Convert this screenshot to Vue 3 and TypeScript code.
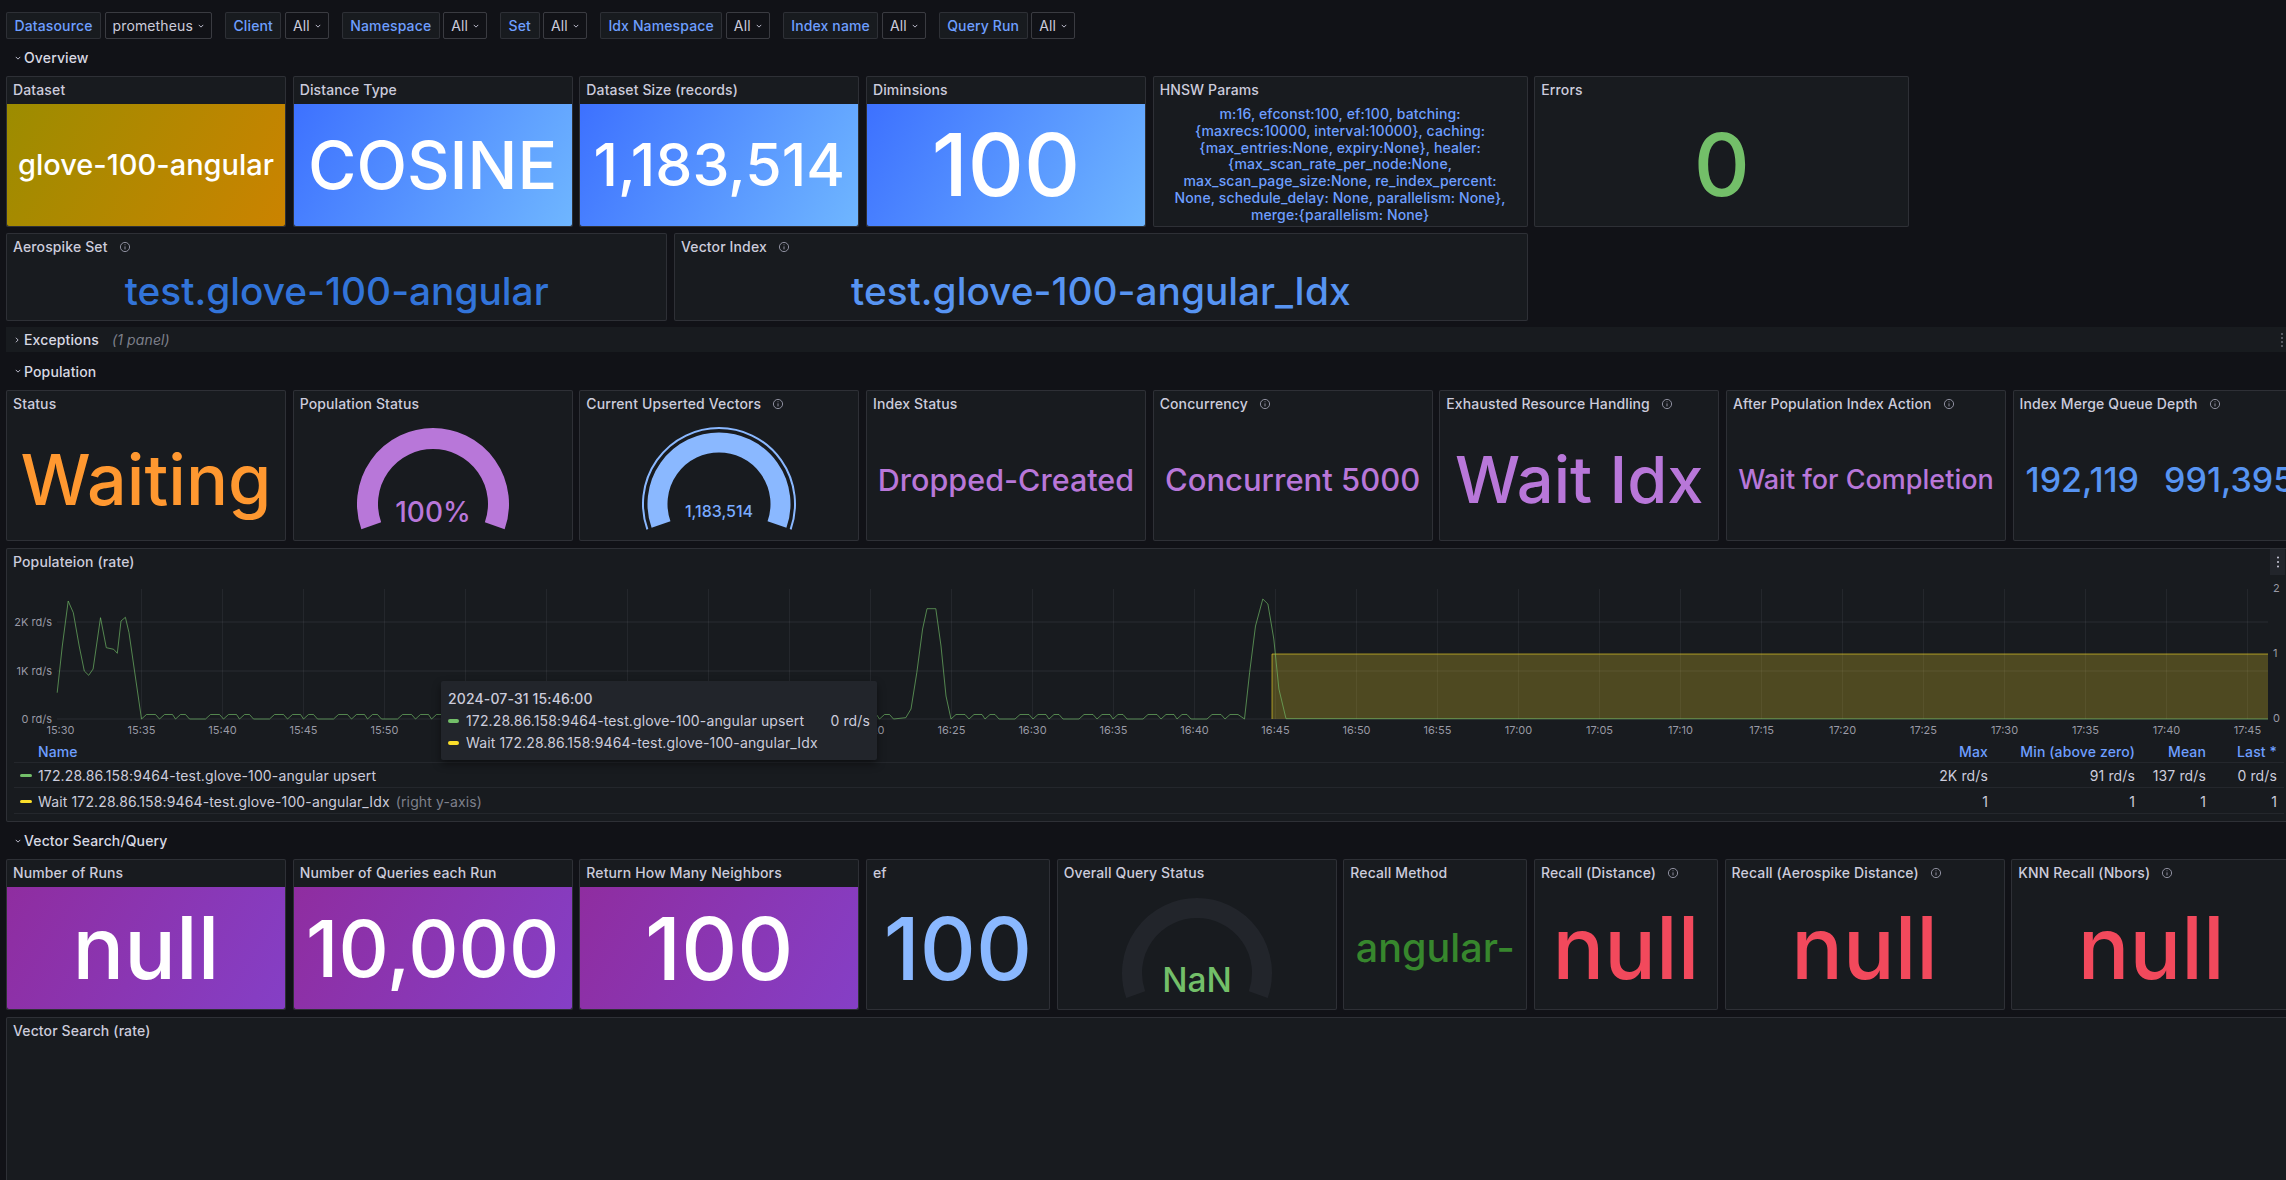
<script setup lang="ts">
interface Panel {
  title: string;
  value?: string;
  size?: number;
  color?: string;
  bg?: string;
  info?: boolean;
  gauge?: string;
}

const filters = [
  { label: 'Datasource', value: 'prometheus' },
  { label: 'Client', value: 'All' },
  { label: 'Namespace', value: 'All' },
  { label: 'Set', value: 'All' },
  { label: 'Idx Namespace', value: 'All' },
  { label: 'Index name', value: 'All' },
  { label: 'Query Run', value: 'All' },
];

const overviewTop: Panel[] = [
  { title: 'Dataset', value: 'glove-100-angular', size: 29, color: '#fff', bg: 'bg-yellow' },
  { title: 'Distance Type', value: 'COSINE', size: 66, color: '#fff', bg: 'bg-blue' },
  { title: 'Dataset Size (records)', value: '1,183,514', size: 59, color: '#fff', bg: 'bg-blue' },
  { title: 'Diminsions', value: '100', size: 87, color: '#fff', bg: 'bg-blue' },
];

const overviewBottom: Panel[] = [
  { title: 'Aerospike Set', value: 'test.glove-100-angular', size: 38.8, color: '#3274d9', info: true },
  { title: 'Vector Index', value: 'test.glove-100-angular_Idx', size: 38.8, color: '#5794f2', info: true },
];

const population: Panel[] = [
  { title: 'Status', value: 'Waiting', size: 70, color: '#ff9830' },
  { title: 'Population Status', gauge: 'percent' },
  { title: 'Current Upserted Vectors', gauge: 'vectors', info: true },
  { title: 'Index Status', value: 'Dropped-Created', size: 30.5, color: '#b877d9' },
  { title: 'Concurrency', value: 'Concurrent 5000', size: 31, color: '#b877d9', info: true },
  { title: 'Exhausted Resource Handling', value: 'Wait Idx', size: 65, color: '#b877d9', info: true },
  { title: 'After Population Index Action', value: 'Wait for Completion', size: 27, color: '#b877d9', info: true },
];

const query: Panel[] = [
  { title: 'Number of Runs', value: 'null', size: 86, color: '#fff', bg: 'bg-purple' },
  { title: 'Number of Queries each Run', value: '10,000', size: 78, color: '#fff', bg: 'bg-purple' },
  { title: 'Return How Many Neighbors', value: '100', size: 87, color: '#fff', bg: 'bg-purple' },
  { title: 'ef', value: '100', size: 87, color: '#8ab8ff' },
  { title: 'Overall Query Status', gauge: 'nan' },
  { title: 'Recall Method', value: 'angular-', size: 39.5, color: '#37872d' },
  { title: 'Recall (Distance)', value: 'null', size: 86, color: '#f2495c', info: true },
  { title: 'Recall (Aerospike Distance)', value: 'null', size: 86, color: '#f2495c', info: true },
  { title: 'KNN Recall (Nbors)', value: 'null', size: 86, color: '#f2495c', info: true },
];

const hnsw =
  'm:16, efconst:100, ef:100, batching: {maxrecs:10000, interval:10000}, caching: {max_entries:None, expiry:None}, healer: {max_scan_rate_per_node:None, max_scan_page_size:None, re_index_percent: None, schedule_delay: None, parallelism: None}, merge:{parallelism: None}';

// gauge arcs, angle measured from 12 o'clock
const arc = (r: number, a = 109.5, cx = 80, cy = 86) => {
  const rad = (a * Math.PI) / 180;
  const dx = r * Math.sin(rad);
  const dy = r * Math.cos(rad);
  return `M${cx - dx} ${cy - dy}A${r} ${r} 0 1 1 ${cx + dx} ${cy - dy}`;
};

// time axis
const ticks: { x: number; label: string }[] = [];
for (let i = 0; i < 28; i++) {
  const mins = 15 * 60 + 30 + i * 5;
  const label = `${Math.floor(mins / 60)}:${String(mins % 60).padStart(2, '0')}`;
  ticks.push({ x: 60.5 + i * 81, label });
}
// the tooltip sits on top of these labels
const tickLabels = ticks.filter((t) => t.x < 450 || t.x > 860);

// little idle bumps between the spikes
const bumps = (from: number, to: number) => {
  const base = 718;
  const top = 713.5;
  const shape: [number, number][] = [
    [5, top], [14, top], [18, base], [23, top], [31, top], [34, base], [39, top], [44, top], [48, base], [64, base],
  ];
  const pts: [number, number][] = [];
  for (let start = from; start < to; start += 64) {
    for (const [dx, y] of shape) {
      if (start + dx <= to) pts.push([start + dx, y]);
    }
  }
  return pts;
};

const linePoints: [number, number][] = [
  [57.2, 691.7], [62.3, 645], [68.2, 600], [73.3, 611.7], [79.2, 645], [84.3, 670], [88.7, 674.3], [93.1, 668],
  [100.5, 616.7], [106.3, 646.7], [113.7, 648.3], [117.3, 652.3], [121, 620], [125.4, 616.3], [129, 631.7],
  [135.7, 678], [141.5, 718],
  ...bumps(141.5, 900),
  [905.8, 716.7], [911, 708], [916.8, 671.7], [922.6, 628], [927, 607.7], [935.8, 607.7], [941, 645], [946, 695], [951, 718],
  ...bumps(951, 1240),
  [1244.5, 718], [1249.6, 671.7], [1255.5, 625], [1262.8, 598], [1267.9, 603], [1273.8, 638], [1278.9, 688], [1286, 717.7],
  [2268, 718],
];
const linePath = 'M' + linePoints.map((p) => p.join(' ')).join('L');

const legend = [
  { name: '172.28.86.158:9464-test.glove-100-angular upsert', color: '#73bf69', cells: ['2K rd/s', '91 rd/s', '137 rd/s', '0 rd/s'] },
  { name: 'Wait 172.28.86.158:9464-test.glove-100-angular_Idx', suffix: '(right y-axis)', color: '#fade2a', cells: ['1', '1', '1', '1'] },
];
</script>

<template>
  <div class="page">
    <div class="filters">
      <div v-for="f in filters" :key="f.label" class="filter">
        <span class="f-label">{{ f.label }}</span>
        <span class="f-select">
          {{ f.value }}
          <svg class="chev-s" viewBox="0 0 8 5"><path d="M1 1l3 3 3-3" /></svg>
        </span>
      </div>
    </div>

    <div class="row-head">
      <svg class="chev" viewBox="0 0 8 5"><path d="M1 1l3 3 3-3" /></svg>
      Overview
    </div>

    <div class="grid g-top">
      <div v-for="p in overviewTop" :key="p.title" class="panel">
        <div class="p-title">{{ p.title }}</div>
        <div class="p-body" :class="p.bg" :style="{ color: p.color, fontSize: p.size + 'px' }">{{ p.value }}</div>
      </div>
      <div class="panel">
        <div class="p-title">HNSW Params</div>
        <div class="hnsw">{{ hnsw }}</div>
      </div>
      <div class="panel">
        <div class="p-title">Errors</div>
        <div class="p-body zero">0</div>
      </div>
    </div>

    <div class="grid g-second">
      <div v-for="p in overviewBottom" :key="p.title" class="panel">
        <div class="p-title">
          {{ p.title }}
          <svg class="info" viewBox="0 0 12 12"><circle cx="6" cy="6" r="4.6" /><path d="M6 5.4v3M6 3.4v.8" /></svg>
        </div>
        <div class="p-body" :style="{ color: p.color, fontSize: p.size + 'px' }">{{ p.value }}</div>
      </div>
    </div>

    <div class="collapsed">
      <svg class="chev side" viewBox="0 0 5 8"><path d="M1 1l3 3-3 3" /></svg>
      Exceptions <em>(1 panel)</em>
      <span class="handle"></span>
    </div>

    <div class="row-head head-pop">
      <svg class="chev" viewBox="0 0 8 5"><path d="M1 1l3 3 3-3" /></svg>
      Population
    </div>

    <div class="grid g-pop">
      <div v-for="p in population" :key="p.title" class="panel">
        <div class="p-title">
          {{ p.title }}
          <svg v-if="p.info" class="info" viewBox="0 0 12 12"><circle cx="6" cy="6" r="4.6" /><path d="M6 5.4v3M6 3.4v.8" /></svg>
        </div>
        <div v-if="p.gauge === 'percent'" class="p-body">
          <svg class="gauge" viewBox="0 0 160 122">
            <path :d="arc(65.5)" class="band" stroke="#b877d9" stroke-width="21" />
            <text x="80" y="104" fill="#b877d9" font-size="28" class="g-text">100%</text>
          </svg>
        </div>
        <div v-else-if="p.gauge === 'vectors'" class="p-body">
          <svg class="gauge" viewBox="0 0 160 122">
            <path :d="arc(76)" class="band" stroke="#8ab8ff" stroke-width="2" />
            <path :d="arc(61.5)" class="band" stroke="#8ab8ff" stroke-width="20" />
            <text x="80" y="99" fill="#79abff" font-size="16" class="g-text">1,183,514</text>
          </svg>
        </div>
        <div v-else class="p-body" :style="{ color: p.color, fontSize: p.size + 'px' }">{{ p.value }}</div>
      </div>
      <div class="panel">
        <div class="p-title">
          Index Merge Queue Depth
          <svg class="info" viewBox="0 0 12 12"><circle cx="6" cy="6" r="4.6" /><path d="M6 5.4v3M6 3.4v.8" /></svg>
        </div>
        <div class="p-body queue"><span>192,119</span><span>991,395</span></div>
      </div>
    </div>

    <div class="panel chart-panel">
      <div class="p-title">Populateion (rate)</div>
      <div class="menu">
        <svg viewBox="0 0 4 14"><circle cx="2" cy="2.5" r="1" /><circle cx="2" cy="7" r="1" /><circle cx="2" cy="11.5" r="1" /></svg>
      </div>
      <svg class="chart" viewBox="6 575 2286 167">
        <line v-for="t in ticks.slice(1)" :key="t.x" :x1="t.x" :x2="t.x" y1="588" y2="718" class="grid-v" />
        <line v-for="y in [621, 670, 718]" :key="y" x1="57" x2="2268" :y1="y" :y2="y" class="grid-h" />
        <text v-for="t in tickLabels" :key="t.label" :x="t.x" y="733" class="tick">{{ t.label }}</text>
        <text x="52" y="625" class="axis">2K rd/s</text>
        <text x="52" y="674" class="axis">1K rd/s</text>
        <text x="52" y="722" class="axis">0 rd/s</text>
        <text x="2273" y="591" class="axis-r">2</text>
        <text x="2273" y="656" class="axis-r">1</text>
        <text x="2273" y="721" class="axis-r">0</text>
        <rect x="1272" y="653" width="996" height="65" fill="#fade2a" fill-opacity="0.24" />
        <path d="M1272 718V653H2268" fill="none" stroke="#fade2a" stroke-opacity="0.6" />
        <path :d="linePath" fill="none" stroke="#73bf69" stroke-opacity="0.65" />
      </svg>
      <div class="legend">
        <div class="l-row l-head">
          <span class="l-name">Name</span><span>Max</span><span>Min (above zero)</span><span>Mean</span><span>Last *</span>
        </div>
        <div v-for="l in legend" :key="l.name" class="l-row">
          <span class="l-name">
            <i class="mark" :style="{ background: l.color }"></i>{{ l.name }}
            <em v-if="l.suffix">{{ l.suffix }}</em>
          </span>
          <span v-for="(c, i) in l.cells" :key="i">{{ c }}</span>
        </div>
      </div>
      <div class="tooltip">
        <div class="t-date">2024-07-31 15:46:00</div>
        <div class="t-row">
          <i class="t-mark green"></i>172.28.86.158:9464-test.glove-100-angular upsert<b>0 rd/s</b>
        </div>
        <div class="t-row">
          <i class="t-mark yellow"></i>Wait 172.28.86.158:9464-test.glove-100-angular_Idx
        </div>
      </div>
    </div>

    <div class="row-head">
      <svg class="chev" viewBox="0 0 8 5"><path d="M1 1l3 3 3-3" /></svg>
      Vector Search/Query
    </div>

    <div class="grid g-query">
      <div v-for="p in query" :key="p.title" class="panel">
        <div class="p-title">
          {{ p.title }}
          <svg v-if="p.info" class="info" viewBox="0 0 12 12"><circle cx="6" cy="6" r="4.6" /><path d="M6 5.4v3M6 3.4v.8" /></svg>
        </div>
        <div v-if="p.gauge" class="p-body">
          <svg class="gauge" viewBox="0 0 160 122">
            <path :d="arc(65)" class="band" stroke="#22252b" stroke-width="20" />
            <text x="80" y="105" fill="#73bf69" font-size="33.5" class="g-text">NaN</text>
          </svg>
        </div>
        <div v-else class="p-body" :class="p.bg" :style="{ color: p.color, fontSize: p.size + 'px' }">{{ p.value }}</div>
      </div>
    </div>

    <div class="panel search-panel">
      <div class="p-title">Vector Search (rate)</div>
    </div>
  </div>
</template>

<style>
html,
body {
  margin: 0;
  height: 100%;
  overflow: hidden;
  background: #111217;
}
</style>

<style scoped>
.page {
  width: 2286px;
  height: 1180px;
  box-sizing: border-box;
  padding: 12px 0 0 6px;
  background: #111217;
  color: #ccccdc;
  font-family: Inter, "Noto Sans", sans-serif;
  font-size: 14px;
  letter-spacing: 0.13px;
  overflow: hidden;
}

.filters {
  display: flex;
  gap: 13px;
  height: 27px;
}
.filter {
  display: flex;
  gap: 3.5px;
}
.f-label,
.f-select {
  display: flex;
  align-items: center;
  box-sizing: border-box;
  height: 27px;
  padding: 0 7px;
  border-radius: 2px;
  white-space: nowrap;
}
.f-label {
  padding: 0 7.5px;
  background: #181b1f;
  border: 1px solid rgba(204, 204, 220, 0.12);
  color: #6e9fff;
  font-weight: 500;
}
.f-select {
  gap: 5px;
  border: 1px solid rgba(204, 204, 220, 0.22);
}
.chev-s {
  width: 6px;
  height: 4px;
  fill: none;
  stroke: #ccccdc;
  stroke-width: 1.2;
}

.row-head {
  display: flex;
  align-items: center;
  gap: 3px;
  height: 37px;
  padding-left: 9px;
  font-weight: 500;
  color: #d8d9e3;
}
.head-pop {
  height: 38px;
}
.chev {
  width: 6px;
  height: 4px;
  fill: none;
  stroke: #ccccdc;
  stroke-width: 1.2;
}
.chev.side {
  width: 4px;
  height: 6px;
  margin-right: 2px;
}

.grid {
  display: grid;
  column-gap: 6.67px;
}
.g-top {
  grid-template-columns: 280px 280px 280px 280px 375px 375px;
  height: 150.67px;
}
.g-second {
  grid-template-columns: 661.33px 853.67px;
  height: 87.4px;
  margin-top: 6.67px;
}
.g-pop {
  grid-template-columns: repeat(8, 280px);
  height: 150.67px;
}
.g-query {
  grid-template-columns: 280px 280px 280px 184px 280px 184px 184px 280px 280px;
  height: 150.67px;
}

.panel {
  position: relative;
  display: flex;
  flex-direction: column;
  box-sizing: border-box;
  background: #181b1f;
  border: 1px solid rgba(204, 204, 220, 0.12);
  border-radius: 2px;
  min-width: 0;
}
.p-title {
  display: flex;
  align-items: center;
  flex: none;
  box-sizing: border-box;
  height: 27px;
  padding: 0 0 2px 6px;
  font-weight: 500;
  white-space: nowrap;
}
.info {
  width: 12px;
  height: 12px;
  margin-left: 11px;
  fill: none;
  stroke: #9a9bab;
  stroke-width: 0.9;
}
.p-body {
  flex: 1;
  display: flex;
  align-items: center;
  justify-content: center;
  min-height: 0;
  font-weight: 500;
  letter-spacing: 0;
  white-space: nowrap;
  overflow: hidden;
  border-radius: 0 0 2px 2px;
}
.bg-yellow {
  background: linear-gradient(120deg, #9c8c00, #cb8300);
}
.bg-blue {
  background: linear-gradient(120deg, #3d71ff, #6fb6ff);
}
.bg-purple {
  background: linear-gradient(120deg, #8f2da0, #853fc6);
}
.zero {
  color: #73bf69;
  font-size: 87px;
}
.queue {
  justify-content: flex-start;
  gap: 25px;
  padding-left: 12px;
  color: #5794f2;
  font-size: 34px;
}
.hnsw {
  flex: 1;
  padding: 2px 20px 0;
  text-align: center;
  font-size: 14px;
  font-weight: 500;
  line-height: 16.8px;
  color: #6e9fff;
  overflow: hidden;
}
.gauge {
  width: 160px;
  height: 122px;
}
.band {
  fill: none;
}
.g-text {
  text-anchor: middle;
  font-weight: 500;
  font-family: Inter, sans-serif;
}

.collapsed {
  display: flex;
  align-items: center;
  gap: 3px;
  position: relative;
  height: 25px;
  margin-top: 6.67px;
  padding-left: 9px;
  background: #181b1f;
  font-weight: 500;
  color: #d8d9e3;
}
.collapsed em {
  margin-left: 10px;
  font-weight: 400;
  color: #7e808b;
}
.handle {
  position: absolute;
  right: 3px;
  top: 6px;
  width: 2px;
  height: 14px;
  background: repeating-linear-gradient(#55575f 0 2px, transparent 2px 4px);
}

.chart-panel {
  height: 274.7px;
  margin-top: 6.67px;
  width: 2290px;
}
.menu {
  position: absolute;
  right: 10px;
  top: 0;
  display: flex;
  align-items: center;
  justify-content: center;
  width: 15px;
  height: 26px;
  background: #22252b;
}
.menu svg {
  width: 4px;
  height: 14px;
  fill: #ccccdc;
}
.chart {
  display: block;
  flex: none;
  width: 2286px;
  height: 167px;
  margin-left: -1px;
}
.grid-v {
  stroke: rgba(204, 204, 220, 0.07);
}
.grid-h {
  stroke: rgba(204, 204, 220, 0.05);
  stroke-width: 2;
}
.tick,
.axis,
.axis-r {
  font-size: 11px;
  letter-spacing: 0;
  fill: rgba(204, 204, 220, 0.72);
  font-family: Inter, sans-serif;
}
.tick {
  text-anchor: middle;
}
.axis {
  text-anchor: end;
}

.legend {
  width: 2270px;
  margin-left: 7px;
}
.l-row {
  display: grid;
  grid-template-columns: 1fr 100px 147px 71px 71px;
  align-items: center;
  height: 25.5px;
  padding-top: 2px;
  border-bottom: 1.5px solid rgba(204, 204, 220, 0.07);
  box-sizing: border-box;
}
.l-row > span {
  padding-right: 7px;
  text-align: right;
  white-space: nowrap;
}
.l-row > .l-name {
  position: relative;
  padding-left: 24px;
  text-align: left;
}
.l-head {
  height: 20px;
  padding: 0 0 4px;
  font-weight: 500;
  color: #6e9fff;
}
.l-name em {
  margin-left: 2px;
  font-style: normal;
  color: #7e808b;
}
.mark {
  position: absolute;
  left: 6px;
  top: 7px;
  width: 12px;
  height: 3px;
  border-radius: 2px;
}

.tooltip {
  position: absolute;
  left: 434px;
  top: 132px;
  box-sizing: border-box;
  width: 436px;
  height: 79px;
  padding: 8px 7px 0;
  background: #22252b;
  border-radius: 2px;
  box-shadow: 0 4px 8px rgba(0, 0, 0, 0.45);
}
.t-date {
  height: 19px;
  line-height: 19px;
  font-weight: 500;
  margin-bottom: 2px;
}
.t-row {
  display: flex;
  align-items: center;
  height: 22px;
  white-space: nowrap;
}
.t-row b {
  margin-left: auto;
  font-weight: 400;
}
.t-mark {
  width: 11px;
  height: 4px;
  margin-right: 7px;
  border-radius: 2px;
}
.green {
  background: #73bf69;
}
.yellow {
  background: #fade2a;
}

.search-panel {
  width: 2290px;
  height: 200px;
  margin-top: 6.67px;
}
</style>
